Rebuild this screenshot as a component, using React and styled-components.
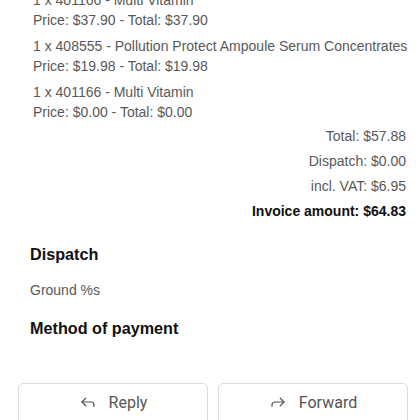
import React from "react";
import styled, { createGlobalStyle } from "styled-components";
import { Reply, Forward } from "lucide-react";

const Global = createGlobalStyle`
  html, body { margin: 0; padding: 0; background: #fff; }
  body { font-family: "Liberation Sans", Arial, sans-serif; overflow: hidden; }
`;

const Page = styled.div`
  width: 420px;
  height: 420px;
  overflow: hidden;
  display: flex;
  flex-direction: column;
`;

const Content = styled.div`
  margin-top: -10px;
  padding: 0 14px 0 30px;
  display: flex;
  flex-direction: column;
`;

const Items = styled.div`
  padding-left: 3px;
  display: flex;
  flex-direction: column;
  gap: 6px;
`;

const Item = styled.div`
  display: flex;
  flex-direction: column;
`;

const Line = styled.div`
  font-size: 14px;
  line-height: 20px;
  color: #585858;
  white-space: nowrap;
`;

const Totals = styled.div`
  margin-top: 2px;
  display: flex;
  flex-direction: column;
  align-items: flex-end;
`;

const TotalLine = styled.div`
  font-size: 14px;
  line-height: 25px;
  color: ${(p) => (p.$strong ? "#111" : "#585858")};
  font-weight: ${(p) => (p.$strong ? 700 : 400)};
`;

const Heading = styled.div`
  font-size: 16.2px;
  font-weight: 700;
  color: #111;
  line-height: 24px;
  margin-top: ${(p) => p.$mt}px;
`;

const Body = styled.div`
  font-size: 14px;
  color: #585858;
  line-height: 20px;
  margin-top: 14px;
`;

const Actions = styled.div`
  margin-top: 43px;
  padding: 0 12px 0 18px;
  display: flex;
  gap: 10px;
`;

const Button = styled.button`
  flex: 1;
  height: 48px;
  border: 1px solid #dadce0;
  border-radius: 5px;
  background: #fff;
  display: flex;
  align-items: center;
  justify-content: center;
  gap: 12px;
  font-family: "Roboto", "Liberation Sans", sans-serif;
  font-size: 16px;
  color: #555;
  padding: 0 0 10px;
  svg { color: #555; }
`;

const items = [
  ["1 x 401166 - Multi Vitamin", "Price: $37.90 - Total: $37.90"],
  ["1 x 408555 - Pollution Protect Ampoule Serum Concentrates", "Price: $19.98 - Total: $19.98"],
  ["1 x 401166 - Multi Vitamin", "Price: $0.00 - Total: $0.00"],
];

export default function App() {
  return (
    <Page>
      <Global />
      <Content>
        <Items>
          {items.map(([a, b], i) => (
            <Item key={i}>
              <Line>{a}</Line>
              <Line>{b}</Line>
            </Item>
          ))}
        </Items>
        <Totals>
          <TotalLine>Total: $57.88</TotalLine>
          <TotalLine>Dispatch: $0.00</TotalLine>
          <TotalLine>incl. VAT: $6.95</TotalLine>
          <TotalLine $strong>Invoice amount: $64.83</TotalLine>
        </Totals>
        <Heading $mt={18}>Dispatch</Heading>
        <Body>Ground %s</Body>
        <Heading $mt={16}>Method of payment</Heading>
      </Content>
      <Actions>
        <Button><Reply size={18} strokeWidth={1.6} />Reply</Button>
        <Button><Forward size={18} strokeWidth={1.6} />Forward</Button>
      </Actions>
    </Page>
  );
}
